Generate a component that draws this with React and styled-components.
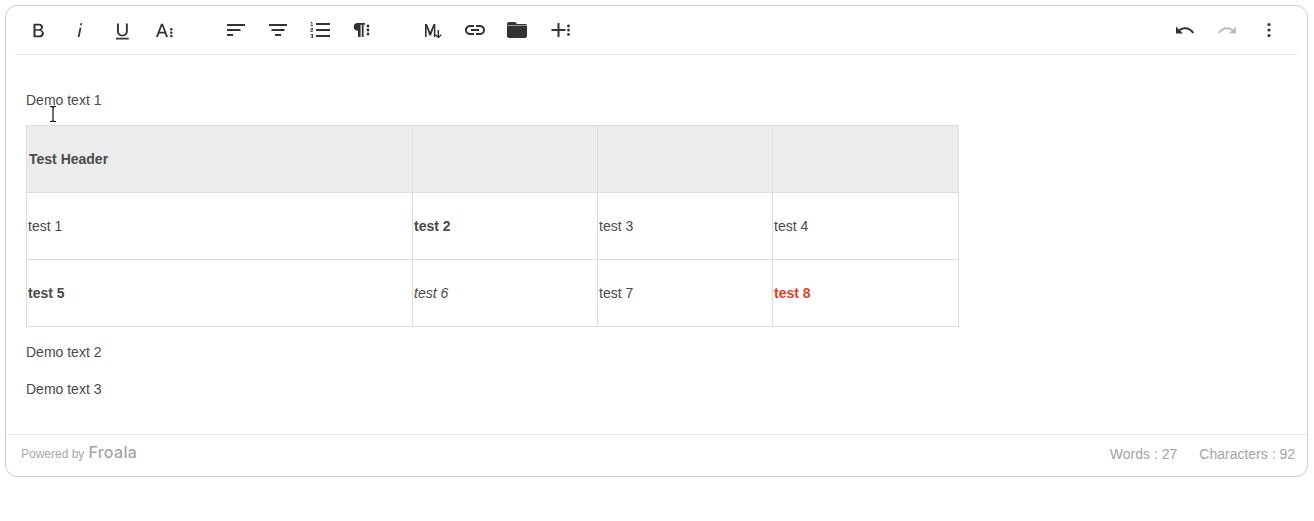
import React from "react";
import styled, { createGlobalStyle } from "styled-components";

const GlobalStyle = createGlobalStyle`
  html, body {
    margin: 0;
    background: #fff;
    font-family: "Liberation Sans", Arial, sans-serif;
  }
`;

const Page = styled.div`
  position: relative;
  padding: 5px 6px 44px 5px;
`;

const Card = styled.div`
  border: 1px solid #ccc;
  border-radius: 12px;
  background: #fff;
`;

const Toolbar = styled.div`
  display: flex;
  justify-content: space-between;
  height: 48px;
  margin: 0 9px;
  padding: 0 8px 0 2px;
  border-bottom: 1px solid #ebebeb;
`;

const Groups = styled.div`
  display: flex;
  gap: 28px;
`;

const Group = styled.div`
  display: flex;
  margin-left: ${(p) => p.$offset || 0}px;
`;

const ToolButton = styled.button`
  display: flex;
  align-items: center;
  justify-content: center;
  width: ${(p) => p.$width || 38}px;
  height: 40px;
  margin: 4px 2px;
  padding: 0;
  border: 0;
  background: none;
  color: ${(p) => (p.$disabled ? "#bdbdbd" : "#333")};
`;

const Icon = styled.svg`
  display: block;
  width: 24px;
  height: 24px;
  flex: none;
  fill: currentColor;
`;

const Editor = styled.div`
  padding: 34px 20px 19px;
  font-size: 14px;
  line-height: 23px;
  color: #4a4a4a;
`;

const Para = styled.p`
  margin: 0 0 14px;
`;

const Table = styled.table`
  width: 933px;
  margin: -1px 0 14px;
  border-collapse: collapse;
  table-layout: fixed;
`;

const Col = styled.col`
  width: ${(p) => p.$width}px;
`;

const HeadCell = styled.th`
  height: 64px;
  padding: 1px 2px;
  border: 1px solid #ddd;
  background: #ececec;
  text-align: left;
  font-weight: 700;
`;

const Cell = styled.td`
  height: 64px;
  padding: 1px;
  border: 1px solid #ddd;
  font-weight: ${(p) => (p.$bold ? 700 : 400)};
  font-style: ${(p) => (p.$italic ? "italic" : "normal")};
  color: ${(p) => p.$color || "inherit"};
`;

const Footer = styled.div`
  display: flex;
  align-items: center;
  justify-content: space-between;
  height: 37px;
  padding: 0 12px 4px 15px;
  border-top: 1px solid #ebebeb;
  color: #a3a3a3;
`;

const Powered = styled.div`
  display: flex;
  align-items: baseline;
  gap: 4px;
  margin-top: -3px;
  font-size: 12px;
  color: #a8a8a8;
`;

const Logo = styled.span`
  font-family: Inter, sans-serif;
  font-size: 16px;
  font-weight: 500;
  letter-spacing: 0.3px;
  color: #a6a6a6;
`;

const Counters = styled.div`
  display: flex;
  gap: 22px;
  font-size: 14px;
`;

const TextCursor = styled.svg`
  position: absolute;
  left: 49px;
  top: 106px;
  width: 8px;
  height: 16px;
  fill: none;
  stroke: #000;
  stroke-width: 1.1;
`;

const iconContent = {
  bold: (
    <path d="M7.500 5.800h5.700c2.300 0 3.800 1.300 3.800 3.300 0 1.300-.7 2.400-1.900 2.900 1.700.4 2.800 1.700 2.800 3.400 0 2.400-1.700 3.900-4.300 3.900H7.500V5.800zm2 1.700v3.700h3.400c1.300 0 2.100-.7 2.100-1.900s-.8-1.800-2.100-1.800H9.500zm0 5.300v4.600h3.900c1.500 0 2.400-.9 2.400-2.300s-.9-2.300-2.500-2.300H9.500z" />
  ),
  italic: (
    <path d="M12.400 5.300h1.800l-.4 2H12l.4-2zM11.600 9.700h1.800L11.500 19H9.700l1.900-9.300z" />
  ),
  underline: (
    <path d="M6 19.800h12.800v1.700H6v-1.700zM7 5.500h1.900v7.700c0 2.200 1.300 3.500 3.500 3.500s3.500-1.300 3.500-3.500V5.500h1.900v7.800c0 3.100-2.100 5-5.400 5S7 16.400 7 13.300V5.500z" />
  ),
  fontSize: (
    <>
      <path d="M9 5.800h2l5 13.200h-2l-1.300-3.600H7.300L6 19H4L9 5.800zm-1.100 8h4.300L10 7.900l-2.100 5.900z" />
      <circle cx="19.300" cy="11.300" r="1.300" />
      <circle cx="19.300" cy="14.700" r="1.300" />
      <circle cx="19.300" cy="18" r="1.300" />
    </>
  ),
  alignLeft: <path d="M3 6h18v2H3V6zM3 11h13.500v2H3v-2zM3 16h6v2H3v-2z" />,
  alignCenter: <path d="M3 6h18v2H3V6zM5.500 11h13v2h-13v-2zM9 16h6v2H9v-2z" />,
  orderedList: (
    <>
      <path d="M8 5h14v2H8V5zM8 11h14v2H8v-2zM8 17h14v2H8v-2z" />
      <path d="M3 4h1.300v3.600H5.300v.7H2.500v-.7h1V4.900H2.800L3 4zM2.500 10h2.400v2.200H3.300v.9h1.700v.7H2.500v-2.200h1.600v-.9H2.500V10zM2.500 16h2.600v4.100H2.500v-.7h1.700v-1H3v-.7h1.200v-1H2.500V16z" />
    </>
  ),
  paragraph: (
    <>
      <path d="M7.500 5h7.500v1.800h-1.400V19h-1.800V6.800h-1.200V19H8v-6.200c-2.500-.1-4.300-1.700-4.300-3.900 0-2.300 1.600-3.900 3.800-3.900z" />
      <circle cx="18" cy="8" r="1.400" />
      <circle cx="18" cy="12" r="1.400" />
      <circle cx="18" cy="16" r="1.400" />
    </>
  ),
  markdown: (
    <path d="M5 6h1.900l3.300 8 3.300-8h1.900v13h-1.600V9.500L11 17.600H9.400L6.600 9.500V19H5V6zM17.600 12h1.500v6l1.700-1.700.9 1-3.300 3.300-3.300-3.300.9-1 1.600 1.700v-6z" />
  ),
  link: (
    <path d="M3.900 12c0-1.710 1.390-3.100 3.100-3.100h4V7H7c-2.760 0-5 2.240-5 5s2.240 5 5 5h4v-1.900H7c-1.710 0-3.100-1.390-3.100-3.100zM8 13h8v-2H8v2zm9-6h-4v1.900h4c1.710 0 3.100 1.390 3.100 3.100s-1.390 3.100-3.100 3.100h-4V17h4c2.760 0 5-2.240 5-5s-2.240-5-5-5z" />
  ),
  folder: (
    <path d="M3 4h6.200l1.800 2h8c1.100 0 2 .6 2 1.400H1V6c0-1.100.9-2 2-2zM1 8h20v10c0 1.100-.9 2-2 2H3c-1.100 0-2-.9-2-2V8z" />
  ),
  plus: (
    <>
      <path d="M9.500 5h2v6h6v2h-6v6h-2v-6h-6v-2h6V5z" />
      <circle cx="20.500" cy="8" r="1.400" />
      <circle cx="20.500" cy="12.200" r="1.400" />
      <circle cx="20.500" cy="16.400" r="1.400" />
    </>
  ),
  undo: (
    <path d="M10.400 9.400c-1.700.3-3.200.9-4.600 2L3 8.500v7h7l-2.700-2.700c3.700-2.600 8.800-1.800 11.500 1.900.2.300.4.500.5.800l1.800-.9C18.900 10.800 14.700 8.700 10.400 9.400z" />
  ),
  redo: (
    <path d="M13.600 9.400c1.700.3 3.200.9 4.600 2L21 8.500v7h-7l2.700-2.700C13 10.200 7.900 11 5.200 14.700c-.2.300-.4.500-.5.800L3 14.600C5.100 10.800 9.300 8.700 13.600 9.400z" />
  ),
  more: (
    <>
      <circle cx="12" cy="6.500" r="1.600" />
      <circle cx="12" cy="12" r="1.600" />
      <circle cx="12" cy="17.500" r="1.600" />
    </>
  ),
};

const Tool = ({ name, width, disabled }) => (
  <ToolButton $width={width} $disabled={disabled}>
    <Icon viewBox="0 0 24 24">{iconContent[name]}</Icon>
  </ToolButton>
);

export default function App() {
  return (
    <Page>
      <GlobalStyle />
      <Card>
        <Toolbar>
          <Groups>
            <Group>
              <Tool name="bold" />
              <Tool name="italic" />
              <Tool name="underline" />
              <Tool name="fontSize" />
            </Group>
            <Group $offset={2}>
              <Tool name="alignLeft" />
              <Tool name="alignCenter" />
              <Tool name="orderedList" />
              <Tool name="paragraph" />
            </Group>
            <Group>
              <Tool name="markdown" />
              <Tool name="link" width={40} />
              <Tool name="folder" />
              <Tool name="plus" />
            </Group>
          </Groups>
          <Group>
            <Tool name="undo" />
            <Tool name="redo" disabled />
            <Tool name="more" />
          </Group>
        </Toolbar>
        <Editor>
          <Para>Demo text 1</Para>
          <Table>
            <colgroup>
              <Col $width={386} />
              <Col $width={185} />
              <Col $width={175} />
              <Col $width={186} />
            </colgroup>
            <thead>
              <tr>
                <HeadCell>Test Header</HeadCell>
                <HeadCell />
                <HeadCell />
                <HeadCell />
              </tr>
            </thead>
            <tbody>
              <tr>
                <Cell>test 1</Cell>
                <Cell $bold>test 2</Cell>
                <Cell>test 3</Cell>
                <Cell>test 4</Cell>
              </tr>
              <tr>
                <Cell $bold>test 5</Cell>
                <Cell $italic>test 6</Cell>
                <Cell>test 7</Cell>
                <Cell $bold $color="#e03e2d">test 8</Cell>
              </tr>
            </tbody>
          </Table>
          <Para>Demo text 2</Para>
          <Para>Demo text 3</Para>
        </Editor>
        <Footer>
          <Powered>
            Powered by <Logo>Froala</Logo>
          </Powered>
          <Counters>
            <span>Words : 27</span>
            <span>Characters : 92</span>
          </Counters>
        </Footer>
      </Card>
      <TextCursor viewBox="0 0 8 16">
        <path d="M1 .5h2l1 1 1-1h2M4 1.500v13M1 15.500h2l1-1 1 1h2" />
      </TextCursor>
    </Page>
  );
}
